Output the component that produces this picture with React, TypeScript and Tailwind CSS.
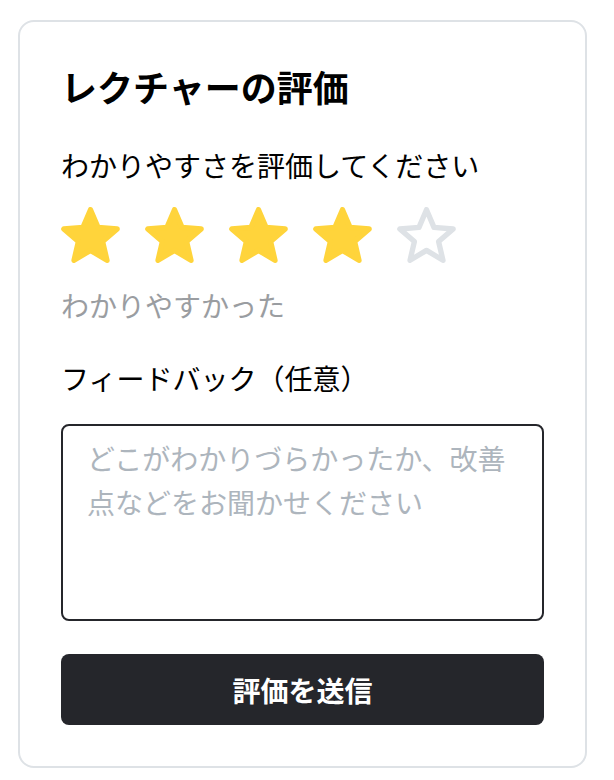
import { useState } from 'react'

const STAR_POINTS =
  '12,2 14.81,8.63 22,9.24 16.54,13.97 18.18,21 12,17.27 5.82,21 7.46,13.97 2,9.24 9.19,8.63'

function Star({ filled }: { filled: boolean }) {
  return (
    <svg viewBox="1 1 22 21" className="w-[59px] h-[56px] shrink-0">
      <polygon
        points={STAR_POINTS}
        fill={filled ? '#ffd43b' : '#ffffff'}
        stroke={filled ? '#ffd43b' : '#dee2e6'}
        strokeWidth={2}
        strokeLinejoin="round"
      />
    </svg>
  )
}

const LABELS = ['', 'わかりにくかった', 'ややわかりにくかった', 'ふつう', 'わかりやすかった', 'とてもわかりやすかった']

export default function App() {
  const [rating, setRating] = useState(4)
  const [feedback, setFeedback] = useState('')

  return (
    <div
      className="min-h-screen bg-white px-[18px] pt-[20px] text-black"
      style={{ fontFamily: '"Noto Sans CJK JP", "Noto Sans", sans-serif' }}
    >
      <div className="w-[569px] rounded-[16px] border-2 border-[#dee2e6] bg-white px-[41px] pt-[40px] pb-[41px]">
        <h3 className="text-[36px] font-bold leading-[48px]">レクチャーの評価</h3>

        <p className="mt-[35px] text-[28px] leading-[40px]">わかりやすさを評価してください</p>

        {/* 星 */}
        <div className="mt-[22px] flex gap-[25px]">
          {[1, 2, 3, 4, 5].map(n => (
            <button key={n} onClick={() => setRating(n)} className="p-0">
              <Star filled={n <= rating} />
            </button>
          ))}
        </div>

        <p className="mt-[22px] text-[28px] leading-[40px] text-[#9a9da1]">{LABELS[rating]}</p>

        <label className="mt-[33px] block text-[28px] leading-[40px]">フィードバック（任意）</label>

        <textarea
          autoFocus
          value={feedback}
          onChange={e => setFeedback(e.target.value)}
          placeholder="どこがわかりづらかったか、改善点などをお聞かせください"
          className="mt-[26px] block h-[197px] w-full resize-none rounded-[8px] border-2 border-[#25262b] px-[24px] pt-[10px] text-[28px] leading-[44px] outline-none placeholder:text-[#adb5bd]"
        />

        <button className="mt-[33px] flex h-[71px] w-full items-center justify-center rounded-[8px] bg-[#25262b] text-[28px] font-bold text-white">
          評価を送信
        </button>
      </div>
    </div>
  )
}
